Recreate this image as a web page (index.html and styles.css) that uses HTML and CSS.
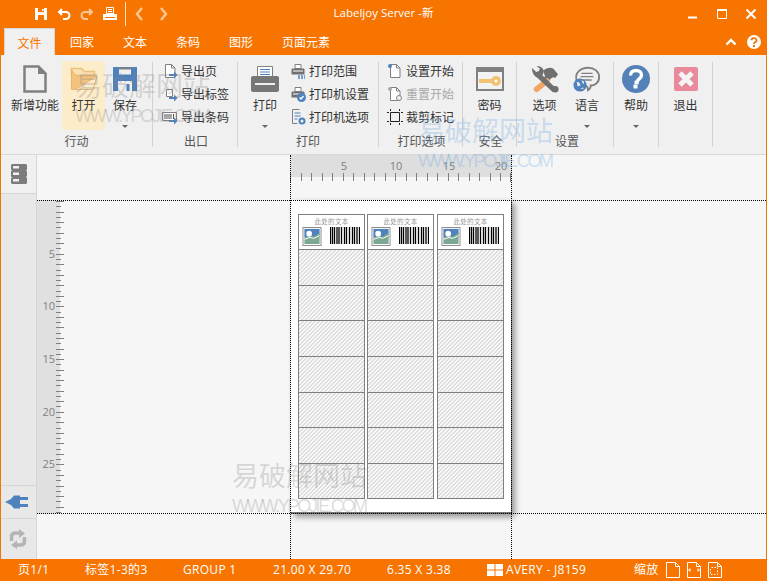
FILE: index.html
```html
<!DOCTYPE html>
<html lang="zh">
<head>
<meta charset="utf-8">
<title>Labeljoy Server</title>
<link rel="stylesheet" href="styles.css">
</head>
<body>
<svg class="defs" width="0" height="0" aria-hidden="true">
  <symbol id="sheet" viewBox="0 0 16 16"><path d="M3.5 1.5h6l3.5 3.5v9.500h-9.500z" fill="#fff" stroke="#808080"/><path d="M9.500 1.500v3.500h3.500" fill="none" stroke="#808080"/></symbol>
  <symbol id="arrow" viewBox="0 0 16 16"><path d="M7 11h5V8.500l3.500 3.500-3.500 3.500V13H7z" fill="#4f81bd"/></symbol>
  <symbol id="minip" viewBox="0 0 16 16"><path d="M5 1.500h6v4H5z" fill="#fff" stroke="#808080"/><path d="M1.500 6.500q0-1 1-1h11q1 0 1 1v5h-13z" fill="#707070"/><path d="M3 8h10" stroke="#fff"/></symbol>
  <symbol id="thumb" viewBox="0 0 20 20"><rect x=".5" y=".5" width="19" height="19" fill="#fff" stroke="#8a8a8a"/><rect x="2" y="2" width="16" height="9" fill="#4f81bd"/><path d="M2 11l6-2 4 1 6-4v12H2z" fill="#7aa892"/><path d="M2 13l6-2 4 1 6-3" fill="none" stroke="#fff"/><circle cx="7" cy="7" r="3" fill="#fff"/></symbol>
  <symbol id="bars" viewBox="0 0 30 17"><path d="M.5 0v17M2.500 0v17M4.500 0v17M7 0v17M9 0v17M11.500 0v17M14.500 0v17M16.500 0v17M19.500 0v17M22.500 0v17M24.500 0v17M27 0v17M29.500 0v17" stroke="#000" stroke-width="1.300"/></symbol>
</svg>

<div class="window">
  <header class="titlebar">
    <div class="qat">
      <svg class="qi" viewBox="0 0 14 14"><path d="M1 1h12v12H1z" fill="#fff"/><path d="M4 1h6v4H4z" fill="#f77400"/><path d="M8 2h1.500v2H8z" fill="#fff"/><path d="M4 8h6v5H4z" fill="#f77400"/></svg>
      <svg class="qi" viewBox="0 0 14 14"><path d="M2 5h7a3 3 0 0 1 0 7H6M5 2L2 5l3 3" fill="none" stroke="#fff" stroke-width="2"/></svg>
      <svg class="qi dim" viewBox="0 0 14 14"><path d="M12 5H5a3 3 0 0 0 0 7h3M9 2l3 3-3 3" fill="none" stroke="#fff" stroke-width="2"/></svg>
      <svg class="qi" viewBox="0 0 14 14"><path d="M3.500.5h7v6h-7z" fill="none" stroke="#fff"/><path d="M5 2.500h4M5 4.500h4" stroke="#fff"/><path d="M0 7h14v6H0z" fill="#fff"/><path d="M2 10.500h10" stroke="#f77400"/></svg>
      <span class="qsep"></span>
      <svg class="qi dim" viewBox="0 0 14 14"><path d="M9 1L4 7l5 6" fill="none" stroke="#fff" stroke-width="2.400"/></svg>
      <svg class="qi dim" viewBox="0 0 14 14"><path d="M5 1l5 6-5 6" fill="none" stroke="#fff" stroke-width="2.400"/></svg>
    </div>
    <div class="title">Labeljoy Server -新</div>
    <div class="winctl">
      <svg class="wi" viewBox="0 0 12 12"><path d="M1 9.500h9" stroke="#fff" stroke-width="2"/></svg>
      <svg class="wi" viewBox="0 0 12 12"><path d="M1.500 2.500h9v8h-9z" fill="none" stroke="#fff"/><path d="M1 2h10" stroke="#fff" stroke-width="2"/></svg>
      <svg class="wi" viewBox="0 0 12 12"><path d="M1.500 1.500l9 9M10.500 1.500l-9 9" stroke="#fff" stroke-width="2"/></svg>
    </div>
  </header>

  <nav class="tabs">
    <span class="tab active">文件</span>
    <span class="tab">回家</span>
    <span class="tab">文本</span>
    <span class="tab">条码</span>
    <span class="tab">图形</span>
    <span class="tab">页面元素</span>
    <span class="tabtools">
      <svg class="ti" viewBox="0 0 12 12"><path d="M1.500 8.500L6 4l4.500 4.500" fill="none" stroke="#fff" stroke-width="2.400"/></svg>
      <svg class="ti help" viewBox="0 0 14 14"><circle cx="7" cy="7" r="7" fill="#fff"/><path d="M4.500 5.300a2.500 2.200 0 1 1 3.600 2c-.8.500-1.100.8-1.100 1.700" fill="none" stroke="#f77400" stroke-width="1.800"/><path d="M6 10h2v2H6z" fill="#f77400"/></svg>
    </span>
  </nav>

  <section class="ribbon">
    <div class="group g1">
      <div class="items">
        <div class="big w-new">
          <svg class="bi" viewBox="0 0 28 28"><path d="M3.500 1.500h14l7 7v18h-21z" fill="none" stroke="#808080" stroke-width="2.500"/><path d="M17 1.500v7.500h7.500z" fill="#808080"/></svg>
          <span>新增功能</span>
        </div>
        <div class="big w-open hot">
          <svg class="bi" viewBox="0 0 28 28"><path d="M1.500 3.500h10l3 3h10v4h-23z" fill="#fbe0b0" stroke="#e9c07c" stroke-width="1.500"/><path d="M1.500 5v19.500h4L27 11H6z" fill="#f2c27e" stroke="#e6b56e"/><path d="M5 24.500h18l4-13" fill="none" stroke="#e9b873"/></svg>
          <span>打开</span>
        </div>
        <div class="big w-save">
          <svg class="bi" viewBox="0 0 28 28"><path d="M2 2h24v24H2z" fill="#4f81bd"/><path d="M8 3h12v6.500H8z" fill="#f0f0f0"/><path d="M7.500 3.500h13" stroke="#808080" stroke-width="2"/><path d="M7 16h14v10H7z" fill="#f0f0f0"/><path d="M15.500 19h3v7h-3z" fill="#4f81bd"/></svg>
          <span>保存</span>
          <i class="caret"></i>
        </div>
      </div>
      <div class="glabel">行动</div>
    </div>

    <div class="group g2">
      <div class="items stack">
        <div class="row"><span class="si"><svg viewBox="0 0 16 16"><use href="#sheet"/><use href="#arrow"/></svg></span><span>导出页</span></div>
        <div class="row"><span class="si"><svg viewBox="0 0 16 16"><path d="M4.500 3.500h6v7h-6z" fill="#fff" stroke="#808080"/><use href="#arrow"/></svg></span><span>导出标签</span></div>
        <div class="row"><span class="si"><svg viewBox="0 0 16 16"><path d="M.5 3.500h14v8H.5z" fill="#fff" stroke="#808080"/><path d="M3 5v5M5 5v5M7 5v5M9 5v5M11.500 5v5" stroke="#555"/><use href="#arrow"/></svg></span><span>导出条码</span></div>
      </div>
      <div class="glabel">出口</div>
    </div>

    <div class="group g3">
      <div class="items">
        <div class="big w-print">
          <svg class="bi" viewBox="0 0 28 28"><path d="M6.500 1.500h15v10h-15z" fill="#fff" stroke="#808080"/><path d="M9 4.500h10M9 7h10M9 9.500h10" stroke="#4f81bd"/><path d="M0 13q0-2 2-2h24q2 0 2 2v12q0 2-2 2H2q-2 0-2-2z" fill="#777"/><path d="M4 19h20" stroke="#f0f0f0" stroke-width="2"/></svg>
          <span>打印</span>
          <i class="caret"></i>
        </div>
        <div class="stack">
          <div class="row"><span class="si"><svg viewBox="0 0 16 16"><use href="#minip"/><path d="M8 13h7M8 15h7" stroke="#4f81bd" stroke-dasharray="2 1" stroke-width="1.500"/></svg></span><span>打印范围</span></div>
          <div class="row"><span class="si"><svg viewBox="0 0 16 16"><use href="#minip"/><circle cx="11.500" cy="11.500" r="4.500" fill="#4f81bd"/><path d="M9.500 11.500l1.500 1.500 2.500-3" fill="none" stroke="#fff" stroke-width="1.300"/></svg></span><span>打印机设置</span></div>
          <div class="row"><span class="si"><svg viewBox="0 0 16 16"><path d="M2.500 .5h7M2.500 .5v14h5" fill="none" stroke="#808080"/><path d="M4.500 4h6M4.500 7h6M4.500 10h3" stroke="#4f81bd"/><circle cx="12" cy="12" r="2.500" fill="none" stroke="#4f81bd" stroke-width="2"/></svg></span><span>打印机选项</span></div>
        </div>
      </div>
      <div class="glabel">打印</div>
    </div>

    <div class="group g4">
      <div class="items stack">
        <div class="row"><span class="si"><svg viewBox="0 0 16 16"><use href="#sheet"/><circle cx="3" cy="3" r="2" fill="#4f81bd"/></svg></span><span>设置开始</span></div>
        <div class="row off"><span class="si"><svg viewBox="0 0 16 16"><use href="#sheet"/><circle cx="3" cy="3" r="2" fill="#aaa"/><circle cx="12" cy="12" r="2.500" fill="#f0f0f0" stroke="#888"/></svg></span><span>重置开始</span></div>
        <div class="row"><span class="si"><svg viewBox="0 0 16 16"><path d="M3.500 3.500h9v9h-9z" fill="none" stroke="#222"/><path d="M0 3.500h2M14 3.500h2M0 12.500h2M14 12.500h2M3.500 0v2M12.500 0v2M3.500 14v2M12.500 14v2" stroke="#222"/></svg></span><span>裁剪标记</span></div>
      </div>
      <div class="glabel">打印选项</div>
    </div>

    <div class="group g5">
      <div class="items">
        <div class="big w-key">
          <svg class="bi" viewBox="0 0 28 28"><path d="M0 2h28v24H0z" fill="#808080"/><path d="M2 7h24v17H2z" fill="#f3f3f3"/><path d="M3 14h14v4H3z" fill="#f1c26f"/><circle cx="20" cy="16" r="5" fill="#f1c26f"/><circle cx="20" cy="16" r="1.500" fill="#fff"/></svg>
          <span>密码</span>
        </div>
      </div>
      <div class="glabel">安全</div>
    </div>

    <div class="group g6">
      <div class="items">
        <div class="big w-tools">
          <svg class="bi" viewBox="0 0 30 28"><path d="M13 5q6-5 11-2l5 6-3 4-2-1-2 1-6 6-4-4 3-4z" fill="#6f6f6f"/><path d="M17 16l-11 9" stroke="#f2a463" stroke-width="6" stroke-linecap="round"/><path d="M7 9L25 26" stroke="#6f6f6f" stroke-width="5.500"/><path d="M1.500 2.500l4 4 3-1 1-3-3.500-2c4-1 8 2 7.500 6-.3 2-1.500 4-3 5-3 2-9 .5-9.500-9z" fill="#6f6f6f"/><circle cx="26" cy="25" r="3.500" fill="#6f6f6f"/></svg>
          <span>选项</span>
        </div>
        <div class="big w-lang">
          <svg class="bi" viewBox="0 0 30 28"><path d="M4 16C1 7 9 2 16 2c7 0 12 4 12 10 0 6-5 9-9 9 0 2-1 4-3 5 0-2-.5-4-2-5" fill="none" stroke="#808080" stroke-width="2"/><path d="M9 8h12M8 11.500h14M10 15h10" stroke="#808080" stroke-width="1.500"/><circle cx="7.500" cy="20.500" r="7" fill="#4f81bd"/><path d="M4 17l3 1 1 3-3 1zM9 15l3 2-1 3zM8 24l3-1 0 2z" fill="#e9eef5"/></svg>
          <span>语言</span>
          <i class="caret"></i>
        </div>
      </div>
      <div class="glabel">设置</div>
    </div>

    <div class="group g7">
      <div class="items">
        <div class="big w-help">
          <svg class="bi" viewBox="0 0 28 28"><circle cx="14" cy="14" r="14" fill="#5481b8"/><path d="M8.500 10.500C8.500 7 11 5.500 14 5.500s5.500 1.700 5.500 4.500c0 4-4.500 3.700-4.500 7.500h-2.500" fill="none" stroke="#fff" stroke-width="3.400"/><path d="M11.500 19.500h4v4h-4z" fill="#fff"/></svg>
          <span>帮助</span>
          <i class="caret"></i>
        </div>
      </div>
    </div>

    <div class="group g8">
      <div class="items">
        <div class="big w-exit">
          <svg class="bi" viewBox="0 0 28 28"><rect x="2" y="2" width="24" height="24" rx="2" fill="#e8899c"/><path d="M8 8l12 12M20 8L8 20" stroke="#f4f4f4" stroke-width="5"/></svg>
          <span>退出</span>
        </div>
      </div>
    </div>
  </section>

  <main class="work">
    <aside class="rail">
      <div class="cell c-top">
        <svg class="ri" viewBox="0 0 16 20"><path d="M1 0h14l1 1v4.500l-1 1 1 1v4.500l-1 1 1 1V19l-1 1H1l-1-1v-4.500l1-1-1-1V7.500l1-1-1-1V1z" fill="#7c7c7c"/><path d="M2 2h6v2.500H2zM2 8.500h6V11H2zM2 15h6v2.500H2z" fill="#f0f0f0"/></svg>
      </div>
      <div class="cell c-fill"></div>
      <div class="cell c-plug">
        <svg class="ri wide" viewBox="0 0 24 16"><path d="M0 8l6-3 3-3.500h6v13H9l-3-3.500z" fill="#4f81bd"/><path d="M15 4.500h8M15 11.500h8" stroke="#4f81bd" stroke-width="3"/></svg>
      </div>
      <div class="cell c-sync">
        <svg class="ri" viewBox="0 0 18 20"><path d="M2.500 12V8q0-4 4-4h4" fill="none" stroke="#b4b4b4" stroke-width="3.500"/><path d="M10 0l6 4.500-6 4.500z" fill="#b4b4b4"/><path d="M15.500 8v4q0 4-4 4h-4" fill="none" stroke="#b4b4b4" stroke-width="3.500"/><path d="M8 11.500l-6 4.500 6 4z" fill="#b4b4b4"/></svg>
      </div>
    </aside>

    <div class="canvas">
      <div class="ruler-top">
        <span class="n n5">5</span><span class="n n10">10</span><span class="n n15">15</span><span class="n n20">20</span>
      </div>
      <svg class="ticks-top" width="222" height="9"><path d="M.5 0v9M11.500 0v8M21.500 0v8M32.500 0v8M42.500 0v8M53.500 0v8M63.500 0v8M74.500 0v8M84.500 0v8M95.500 0v8M105.500 0v8M116.500 0v8M126.500 0v8M137.500 0v8M147.500 0v8M158.500 0v8M168.500 0v8M179.500 0v8M189.500 0v8M200.500 0v8M210.500 0v8M220.500 0v9" stroke="#808080"/></svg>
      <div class="ruler-left">
        <span class="m m5">5</span><span class="m m10">10</span><span class="m m15">15</span><span class="m m20">20</span><span class="m m25">25</span>
      </div>
      <svg class="ticks-left" width="9" height="314"><path d="M0 .5h8M0 11.500h8M0 21.500h8M0 32.500h8M0 42.500h8M0 53.500h8M0 63.500h8M0 74.500h8M0 84.500h8M0 95.500h8M0 105.500h8M0 116.500h8M0 126.500h8M0 137.500h8M0 148.500h8M0 158.500h8M0 169.500h8M0 179.500h8M0 190.500h8M0 200.500h8M0 211.500h8M0 221.500h8M0 232.500h8M0 242.500h8M0 253.500h8M0 263.500h8M0 274.500h8M0 285.500h8M0 295.500h8M0 306.500h8" stroke="#808080"/><path d="M0 5.500h5M0 16.500h5M0 26.500h5M0 37.500h5M0 47.500h5M0 58.500h5M0 69.500h5M0 79.500h5M0 90.500h5M0 100.500h5M0 111.500h5M0 121.500h5M0 132.500h5M0 142.500h5M0 153.500h5M0 163.500h5M0 174.500h5M0 184.500h5M0 195.500h5M0 205.500h5M0 216.500h5M0 227.500h5M0 237.500h5M0 248.500h5M0 258.500h5M0 269.500h5M0 279.500h5M0 290.500h5M0 300.500h5M0 311.500h5" stroke="#808080"/></svg>

      <div class="page">
        <div class="col c1">
          <div class="lab first">
            <div class="lab-text">此处的文本</div>
            <div class="lab-body">
              <svg class="thumb"><use href="#thumb"/></svg>
              <svg class="bar"><use href="#bars"/></svg>
            </div>
          </div>
          <div class="lab h"></div><div class="lab h"></div><div class="lab h"></div><div class="lab h"></div><div class="lab h"></div><div class="lab h"></div><div class="lab h"></div>
        </div>
        <div class="col c2">
          <div class="lab first">
            <div class="lab-text">此处的文本</div>
            <div class="lab-body">
              <svg class="thumb"><use href="#thumb"/></svg>
              <svg class="bar"><use href="#bars"/></svg>
            </div>
          </div>
          <div class="lab h"></div><div class="lab h"></div><div class="lab h"></div><div class="lab h"></div><div class="lab h"></div><div class="lab h"></div><div class="lab h"></div>
        </div>
        <div class="col c3">
          <div class="lab first">
            <div class="lab-text">此处的文本</div>
            <div class="lab-body">
              <svg class="thumb"><use href="#thumb"/></svg>
              <svg class="bar"><use href="#bars"/></svg>
            </div>
          </div>
          <div class="lab h"></div><div class="lab h"></div><div class="lab h"></div><div class="lab h"></div><div class="lab h"></div><div class="lab h"></div><div class="lab h"></div>
        </div>
      </div>

      <i class="dot-h d1"></i><i class="dot-h d2"></i><i class="dot-v d3"></i><i class="dot-v d4"></i>
    </div>
  </main>

  <footer class="status">
    <span>页1/1</span>
    <span>标签1-3的3</span>
    <span>GROUP 1</span>
    <span>21.00 X 29.70</span>
    <span>6.35 X 3.38</span>
    <span class="avery"><svg class="gridi" viewBox="0 0 16 12"><path d="M0 0h7.500v5.500H0zM8.500 0H16v5.500H8.500zM0 6.500h7.500V12H0zM8.500 6.500H16V12H8.500z" fill="#fff"/></svg>AVERY - J8159</span>
    <span class="zoom">缩放
      <svg class="zi" viewBox="0 0 14 16"><path d="M.5.5h9l4 4v11H.5zM9.500.5v4h4" fill="none" stroke="#fff"/></svg>
      <svg class="zi" viewBox="0 0 14 16"><path d="M.5.5h9l4 4v11H.5zM9.500.5v4h4" fill="none" stroke="#fff"/><path d="M.5 8h3M10.500 8h3M3 6.500v3M11 6.500v3" stroke="#fff"/></svg>
      <svg class="zi" viewBox="0 0 14 16"><path d="M.5.5h9l4 4v11H.5zM9.500.5v4h4" fill="none" stroke="#fff"/><path d="M3.500 5.500h6v7h-7v-7" fill="none" stroke="#fff" stroke-dasharray="1.500 1.500"/></svg>
    </span>
  </footer>

  <div class="wm gray w1"><b>易破解网站</b><em>WWW.YPOJIE.COM</em></div>
  <div class="wm blue w2"><b>易破解网站</b><em>WWW.YPOJIE.COM</em></div>
  <div class="wm gray w3"><b>易破解网站</b><em>WWW.YPOJIE.COM</em></div>
</div>
</body>
</html>
```

FILE: styles.css
```css
* { box-sizing: border-box; }
html, body { margin: 0; padding: 0; }
body { background: #f77400; font-family: "Noto Sans CJK SC", "Noto Sans", sans-serif; font-size: 12px; color: #333; }
.defs { position: absolute; }

.window { position: relative; width: 767px; height: 581px; display: flex; flex-direction: column; overflow: hidden; background: #f77400; }

/* title bar */
.titlebar { height: 28px; flex: none; display: flex; align-items: center; position: relative; color: #fff; }
.qat { display: flex; align-items: center; padding-left: 34px; height: 26px; }
.qi { width: 14px; height: 14px; margin-right: 9px; flex: none; }
.qi.dim { opacity: .6; }
.qsep { width: 1px; height: 24px; background: #fde3c8; margin: 0 7px 0 -1px; }
.title { position: absolute; left: 0; right: 0; top: 4px; text-align: center; line-height: 17px; font-family: "Open Sans", "Noto Sans CJK SC", sans-serif; font-size: 11.500px; }
.winctl { margin-left: auto; display: flex; gap: 17px; padding-right: 10px; }
.wi { width: 12px; height: 12px; }

/* tabs */
.tabs { height: 27px; flex: none; display: flex; padding-left: 4px; align-items: flex-end; }
.tab { height: 27px; line-height: 28px; color: #fff; padding: 0 5px; margin-left: 19px; white-space: nowrap; }
.tab.active { width: 51px; margin-left: 0; text-align: center; padding: 0; background: #f0f0f0; color: #f77400; border: 1px solid #d6d6d6; border-bottom: 0; }
.tab.active + .tab { margin-left: 10px; }
.tabtools { margin-left: auto; padding-right: 6px; display: flex; align-items: center; gap: 10px; height: 27px; }
.ti { width: 12px; height: 12px; }
.ti.help { width: 14px; height: 14px; }

/* ribbon */
.ribbon { height: 100px; flex: none; margin: 0 1px; background: #f0f0f0; border-bottom: 1px solid #d9d9d9; display: flex; padding-top: 7px; }
.group { position: relative; height: 85px; border-right: 1px solid #d2d2d2; flex: none; }
.g1 { width: 152px; } .g2 { width: 85px; } .g3 { width: 141px; } .g4 { width: 84px; }
.g5 { width: 54px; } .g6 { width: 97px; } .g7 { width: 45px; } .g8 { width: 54px; }
.items { display: flex; height: 70px; }
.glabel { position: absolute; left: 0; right: 0; bottom: 0; text-align: center; line-height: 12px; color: #555; }
.g2 .glabel { padding-left: 2px; }
.g4 .glabel, .g5 .glabel { padding-left: 2px; }
.g6 .glabel { padding-left: 4px; }
.big { display: flex; flex-direction: column; align-items: center; flex: none; height: 69px; margin-top: -1px; padding-top: 4px; }
.big span { line-height: 16px; margin-top: 4px; white-space: nowrap; }
.bi { width: 28px; height: 28px; flex: none; }
.hot { background: #fdecc9; }
.caret { width: 0; height: 0; border: 3px solid transparent; border-top: 3px solid #666; border-bottom: 0; margin-top: 12px; }
.w-new { width: 50px; margin-left: 9px; }
.w-open { width: 43px; margin-left: 2px; }
.w-save { width: 40px; }
.w-print { width: 40px; margin-left: 7px; }
.w-key { width: 53px; }
.w-tools { width: 47px; margin-left: 4px; }
.w-lang { width: 40px; margin-left: -1px; }
.w-help { width: 44px; }
.w-exit { width: 53px; }

.stack { display: flex; flex-direction: column; margin-top: -3px; }
.g2 .stack { padding-left: 9px; }
.g3 .stack { padding-left: 5px; }
.g4 .stack { padding-left: 8px; }
.row { display: flex; align-items: center; height: 23px; white-space: nowrap; gap: 3px; }
.row.off { color: #a8a8a8; }
.si { width: 16px; height: 16px; flex: none; }
.si svg { width: 16px; height: 16px; display: block; }

/* work area */
.work { flex: 1; display: flex; margin: 0 1px; min-height: 0; }
.rail { width: 36px; flex: none; display: flex; flex-direction: column; background: #e8e8e8; border-right: 1px solid #d6d6d6; }
.cell { display: flex; align-items: center; justify-content: center; flex: none; }
.c-top { height: 39px; background: #f0f0f0; border-bottom: 1px solid #d6d6d6; }
.c-fill { flex: 1; }
.c-plug { height: 34px; border-top: 1px solid #d6d6d6; border-bottom: 1px solid #d6d6d6; padding-right: 3px; }
.c-sync { height: 40px; padding-right: 2px; }
.ri { width: 16px; height: 20px; }
.ri.wide { width: 24px; height: 16px; }
.c-sync .ri { width: 18px; height: 20px; }

.canvas { flex: 1; position: relative; background: #f6f6f6; overflow: hidden; }
.ruler-top { position: absolute; left: 254px; top: 0; width: 221px; height: 22px; background: #dedede; color: #808080; }
.n { position: absolute; top: 3px; width: 20px; text-align: center; line-height: 16px; font-family: "Open Sans", sans-serif; font-size: 11px; }
.n5 { left: 43px; } .n10 { left: 95px; } .n15 { left: 148px; } .n20 { left: 200px; }
.ticks-top { position: absolute; left: 253px; top: 18px; }
.ruler-left { position: absolute; left: 0; top: 45px; width: 23px; height: 314px; background: #e0e0e0; color: #808080; }
.m { position: absolute; right: 5px; line-height: 16px; font-family: "Open Sans", sans-serif; font-size: 11px; }
.m5 { top: 46px; } .m10 { top: 98px; } .m15 { top: 151px; } .m20 { top: 204px; } .m25 { top: 256px; }
.ticks-left { position: absolute; left: 19px; top: 46px; }

.page { position: absolute; left: 254px; top: 45px; width: 221px; height: 314px; background: #fff; box-shadow: 3px 3px 6px rgba(0,0,0,.4); border-bottom: 2px solid #777; border-right: 1px solid #777; }
.col { position: absolute; top: 13.700px; display: flex; flex-direction: column; height: 285.600px; border: 1px solid #808080; }
.c1 { left: 7px; width: 67px; }
.c2 { left: 76px; width: 67px; }
.c3 { left: 146px; width: 67px; }
.lab { flex: 1 1 0; min-height: 0; border-bottom: 1px solid #808080; }
.lab:last-child { border-bottom: 0; }
.lab.first { background: #fff; }
.lab.h { background: repeating-linear-gradient(135deg, #dddddd 0 1px, #f9f9f9 1px 2.828px); }
.lab-text { text-align: center; font-size: 6.500px; letter-spacing: .3px; line-height: 10px; color: #999; padding-top: 1px; }
.lab-body { display: flex; justify-content: space-between; padding: 1px 4px 0 3px; margin-top: 0; }
.thumb { width: 20px; height: 19px; }
.bar { width: 30px; height: 17px; }

.dot-h { position: absolute; left: 0; right: 0; height: 1px; border-top: 1px dotted #000; }
.dot-v { position: absolute; top: 0; bottom: 0; width: 1px; border-left: 1px dotted #000; }
.d1 { top: 45px; } .d2 { top: 358px; } .d3 { left: 253px; } .d4 { left: 474px; }

/* status */
.status { height: 22px; flex: none; display: grid; grid-template-columns: 67px 98px 90px 114px 100px 147px auto; padding-left: 18px; align-items: center; color: #fff; font-family: "Open Sans", "Noto Sans CJK SC", sans-serif; letter-spacing: .3px; line-height: 22px; white-space: nowrap; }
.avery { display: flex; align-items: center; gap: 3px; }
.gridi { width: 16px; height: 12px; }
.zoom { display: flex; align-items: center; gap: 7px; }
.zi { width: 14px; height: 16px; }

/* watermarks */
.wm { position: absolute; width: 140px; pointer-events: none; }
.wm b { display: block; font-weight: 400; font-size: 27px; line-height: 34px; }
.wm em { display: block; font-style: normal; font-family: "Liberation Sans", sans-serif; font-size: 18px; line-height: 20px; letter-spacing: -2.300px; margin-top: 4px; white-space: nowrap; }
.gray { color: rgba(130,130,130,.28); }
.blue { color: rgba(100,165,225,.3); }
.w1 { left: 75px; top: 68px; }
.w2 { left: 418px; top: 113px; }
.w3 { left: 232px; top: 458px; }
```
